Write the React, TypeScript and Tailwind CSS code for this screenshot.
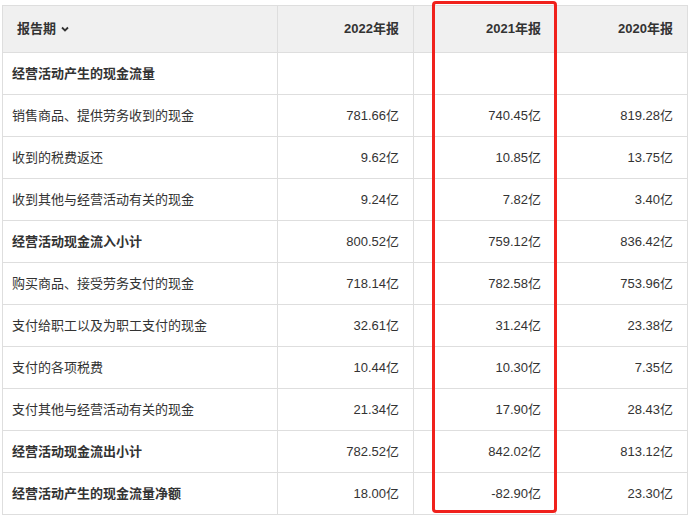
import React from "react";

const rows: [string, string, string, string, boolean][] = [
  ["经营活动产生的现金流量", "", "", "", true],
  ["销售商品、提供劳务收到的现金", "781.66亿", "740.45亿", "819.28亿", false],
  ["收到的税费返还", "9.62亿", "10.85亿", "13.75亿", false],
  ["收到其他与经营活动有关的现金", "9.24亿", "7.82亿", "3.40亿", false],
  ["经营活动现金流入小计", "800.52亿", "759.12亿", "836.42亿", true],
  ["购买商品、接受劳务支付的现金", "718.14亿", "782.58亿", "753.96亿", false],
  ["支付给职工以及为职工支付的现金", "32.61亿", "31.24亿", "23.38亿", false],
  ["支付的各项税费", "10.44亿", "10.30亿", "7.35亿", false],
  ["支付其他与经营活动有关的现金", "21.34亿", "17.90亿", "28.43亿", false],
  ["经营活动现金流出小计", "782.52亿", "842.02亿", "813.12亿", true],
  ["经营活动产生的现金流量净额", "18.00亿", "-82.90亿", "23.30亿", true],
];

const cols = "grid grid-cols-[275px_136px_142px_132px]";

export default function App() {
  return (
    <div className="relative w-[689px] h-[515px] bg-white text-[#333] text-[13px]" style={{ fontFamily: '"Liberation Sans", "Noto Sans CJK SC", sans-serif' }}>
      <div className="absolute left-[2px] top-[5px] w-[686px] border-l border-t border-[#dedede]">
        <div className={`${cols} h-[47px] bg-[#f0f0f0] font-bold`}>
          <div className="flex items-center pl-[14px] border-r border-b border-[#dedede] gap-1">
            报告期
            <svg width="10" height="10" viewBox="0 0 10 10"><path d="M2 3.5 L5 6.5 L8 3.5" stroke="#333" strokeWidth="1.8" fill="none" /></svg>
          </div>
          {["2022年报", "2021年报", "2020年报"].map((h) => (
            <div key={h} className="flex items-center justify-end pr-[14px] border-r border-b border-[#dedede]">{h}</div>
          ))}
        </div>
        {rows.map((r, i) => (
          <div key={i} className={`${cols} h-[42px]`}>
            <div className={`flex items-center pl-[9px] border-r border-b border-[#dedede] ${r[4] ? "font-bold" : ""}`}>{r[0]}</div>
            {[r[1], r[2], r[3]].map((v, j) => (
              <div key={j} className="flex items-center justify-end pr-[14px] border-r border-b border-[#dedede]">{v}</div>
            ))}
          </div>
        ))}
      </div>
      <div className="absolute left-[432px] top-[1px] w-[125px] h-[512px] border-[3px] border-[#f0211c] rounded-[4px]" />
    </div>
  );
}
